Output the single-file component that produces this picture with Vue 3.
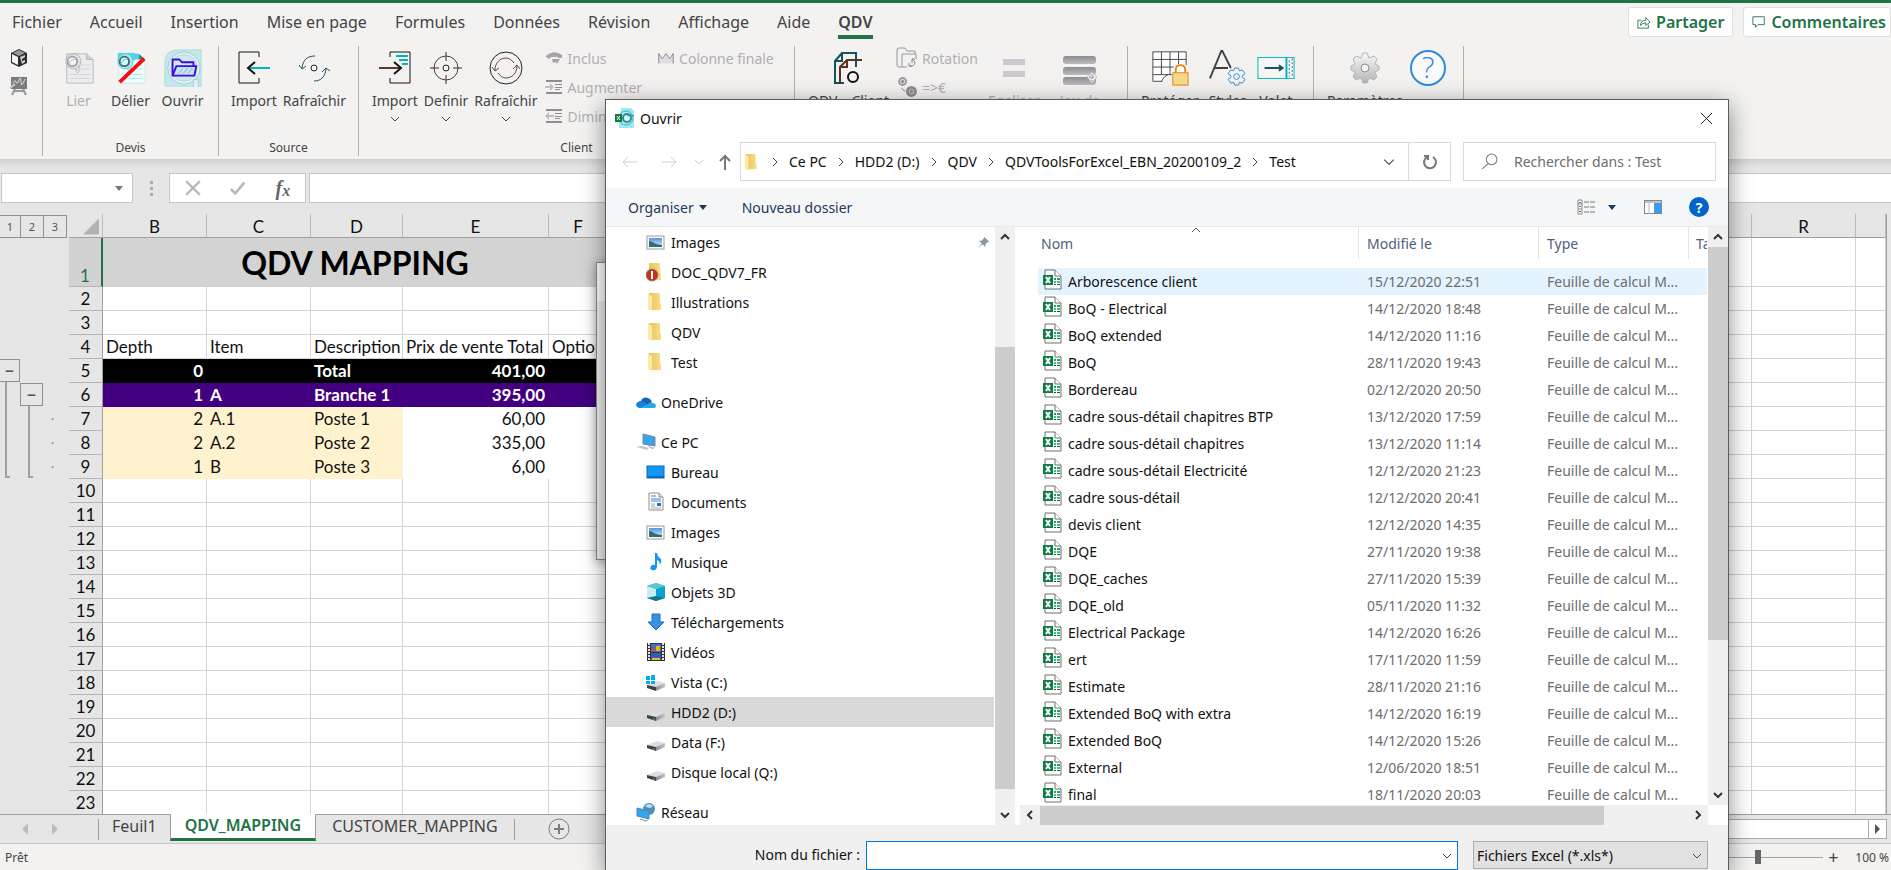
<template>
  <div class="excel">
    <svg class="sprite" aria-hidden="true">
      <defs>
        <linearGradient id="g-gear" x1="0" y1="0" x2="0" y2="1">
          <stop offset="0" stop-color="#f8f8f8" /><stop offset="1" stop-color="#b4b4b4" />
        </linearGradient>
        <linearGradient id="g-bar" x1="0" y1="0" x2="0" y2="1">
          <stop offset="0" stop-color="#8b8b90" /><stop offset="1" stop-color="#bebbc0" />
        </linearGradient>
        <linearGradient id="g-folder" x1="0" y1="0" x2="1" y2="0">
          <stop offset="0" stop-color="#e9c35f" /><stop offset="1" stop-color="#fbdd84" />
        </linearGradient>
        <linearGradient id="g-sky" x1="0" y1="0" x2="0" y2="1">
          <stop offset="0" stop-color="#4f94e0" /><stop offset="1" stop-color="#d9eefb" />
        </linearGradient>
        <linearGradient id="g-drive" x1="0" y1="0" x2="1" y2="0">
          <stop offset="0" stop-color="#8c9094" /><stop offset="1" stop-color="#c4c6c9" />
        </linearGradient>
      </defs>

      <symbol id="cube" viewBox="0 0 18 20">
        <path d="M9 1l8 4v10l-8 4-8-4V5z" fill="#2d2d2d" />
        <path d="M9 2l6 3-6 3-6-3z" fill="#9a9a9a" />
        <path d="M2 6l6 3v8l-6-3z" fill="#f4f4f4" />
        <path d="M10 9l5-2v2l-3 2v2l3-1v2l-3 2z" fill="#d0d0d0" />
      </symbol>
      <symbol id="board" viewBox="0 0 20 20">
        <rect x="2" y="1" width="16" height="12" fill="#7c7c80" />
        <path d="M4 7q2-4 3-1t3-2 2 2 4-3" fill="none" stroke="#ddd" stroke-width="1" />
        <path d="M1 12l5-4" stroke="#c9c9cc" stroke-width="2" />
        <path d="M4 15h12M6 13l-3 6M14 13l3 6" stroke="#9a9a9d" stroke-width="2" fill="none" />
      </symbol>
      <symbol id="link-off" viewBox="0 0 34 36">
        <path d="M4 3h21l7 6v25H4z" fill="#ececef" stroke="#b9b7bd" />
        <path d="M25 3v6h7" fill="#d0d0d5" stroke="#b9b7bd" />
        <path d="M18 15h11M17 19h12M7 25h22M7 29h22" stroke="#d4d2d8" />
        <path d="M14 17v5q2 2 3 0v-6" fill="#ececef" stroke="#b5b3b9" />
        <circle cx="11" cy="11" r="8" fill="#e2e2e6" stroke="#b5b3b9" />
        <circle cx="10" cy="11" r="5" fill="#f5f5f7" stroke="#a3a1a7" stroke-width="2" />
        <path d="M6 14q2-6 8-5" fill="none" stroke="#b9b7bd" />
      </symbol>
      <symbol id="unlink" viewBox="0 0 34 36">
        <path d="M4 3h21l7 6v25H4z" fill="#f0fcfd" stroke="#c9e8ec" />
        <path d="M3 2h18v8H3z" fill="#43dce8" />
        <path d="M25 3l7 6h-7z" fill="#2b7f93" /><path d="M20 3h5v6h-5z" fill="#54cfdb" />
        <path d="M18 15h11M17 19h12M7 25h22M7 29h22" stroke="#9eeaf2" />
        <path d="M14 17v5q2 2 3 0v-6" fill="#c9f6f9" stroke="#7cc6cf" />
        <circle cx="11" cy="11" r="8" fill="#a5edf2" stroke="#72bfca" />
        <circle cx="10" cy="11" r="5" fill="#d8fcff" stroke="#3d6a74" stroke-width="2" />
        <path d="M6 14q2-6 8-5" fill="none" stroke="#4cc2cd" />
        <path d="M5 33L31 8" stroke="#fb0d0d" stroke-width="4" />
      </symbol>
      <symbol id="open-quote" viewBox="0 0 40 40">
        <path d="M1 39V12Q3 1 14 1h25v38z" fill="#c4e9ec" stroke="#a9dbe0" />
        <circle cx="21" cy="20" r="17" fill="#e0f1f3" stroke="#a5ccd3" />
        <circle cx="21" cy="20" r="14" fill="#d2e9ec" stroke="#b5d8dd" />
        <path d="M31 40v-8h5v8" fill="#e6f0f2" stroke="#a5ccd3" />
        <path d="M9 28V11h7l3 3h12v4" fill="#cfe9ed" stroke="#3b0ae6" stroke-width="2" stroke-linejoin="round" />
        <path d="M9 28l4-10h21l-2 10z" fill="#c4e4ea" stroke="#3b0ae6" stroke-width="2" stroke-linejoin="round" />
        <path d="M15 26l5-6M20 26l5-6M25 26l5-6" stroke="#7db5cf" />
      </symbol>
      <symbol id="import-in" viewBox="0 0 34 34">
        <path d="M22 6V1H2v31h20v-5" fill="none" stroke="#151515" stroke-width="1" />
        <path d="M33 17H11" stroke="#00b5b8" stroke-width="2" />
        <path d="M18 11l-7 6 7 6" fill="none" stroke="#151515" stroke-width="2" />
      </symbol>
      <symbol id="refresh-src" viewBox="0 0 34 34">
        <circle cx="17" cy="17" r="3" fill="none" stroke="#222" stroke-width="1" />
        <path d="M18 5C10 5 6 9 5 17M2 14l3 4 4-3" fill="none" stroke="#1c5561" stroke-width="1" />
        <path d="M17 30c7 0 11-4 12-12M25 21l4-4 4 3" fill="none" stroke="#1c5561" stroke-width="1" />
      </symbol>
      <symbol id="import-out" viewBox="0 0 34 34">
        <path d="M12 6V1h20v31H12v-5" fill="none" stroke="#151515" stroke-width="1" />
        <path d="M18 5h12M21 9h9M24 13h6" stroke="#00b5b8" stroke-width="2" />
        <path d="M1 17h22" stroke="#5a3a28" stroke-width="2" />
        <path d="M16 11l7 6-7 6" fill="none" stroke="#151515" stroke-width="2" />
      </symbol>
      <symbol id="target" viewBox="0 0 34 34">
        <circle cx="17" cy="17" r="12" fill="none" stroke="#5c3a2b" stroke-width="1" />
        <circle cx="17" cy="17" r="3" fill="none" stroke="#222" stroke-width="1" />
        <path d="M17 1v9M17 24v9M1 17h9M24 17h9" stroke="#3a2a2a" stroke-width="1" />
      </symbol>
      <symbol id="refresh-client" viewBox="0 0 34 34">
        <circle cx="17" cy="17" r="16" fill="none" stroke="#222" stroke-width="1" />
        <path d="M6 19c0-7 5-12 11-12 3 0 6 2 8 5M28 15c0 7-5 12-11 12-3 0-6-2-8-5" fill="none" stroke="#6b4432" stroke-width="1" />
        <path d="M3 16l3 4 4-3M24 18l4-4 3 4" fill="none" stroke="#6b4432" stroke-width="1" />
      </symbol>
      <symbol id="include" viewBox="0 0 18 16">
        <path d="M1 6q8-7 16-1v3h-4V7H6L4 9 1 7z" fill="#a7a5a8" />
        <path d="M7 9h8l-3 5-1-2-3 1z" fill="#a7a5a8" />
      </symbol>
      <symbol id="indent" viewBox="0 0 18 16">
        <path d="M1 1h16v2H1zM1 13h16v2H1zM10 5h7v1h-7zM10 8h7v1h-7zM10 10h5v1h-5z" fill="#8f8d91" />
        <path d="M0 7h5V4l4 4-4 4V9H0z" fill="#c0bec2" />
      </symbol>
      <symbol id="outdent" viewBox="0 0 18 16">
        <path d="M1 1h16v2H1zM1 13h16v2H1zM10 5h7v1h-7zM10 8h7v1h-7zM10 10h5v1h-5z" fill="#8f8d91" />
        <path d="M9 7H4V4L0 8l4 4V9h5z" fill="#c0bec2" />
      </symbol>
      <symbol id="crown" viewBox="0 0 20 14">
        <path d="M1 2l5 7 4-7 4 7 5-7v11H1z" fill="#e2dde4" />
        <path d="M2 13V2l4 6 4-6 4 6 4-6v11" fill="none" stroke="#857f88" />
      </symbol>
      <symbol id="sheets" viewBox="0 0 34 34">
        <path d="M12 32H3V10l7-8h14v14M3 10h7V2" fill="none" stroke="#14525e" stroke-width="2" />
        <path d="M8 32V16l7-7h15M8 16h7V9" fill="none" stroke="#5a3320" stroke-width="2" />
        <circle cx="21" cy="26" r="5" fill="none" stroke="#111" stroke-width="2" />
      </symbol>
      <symbol id="rotation" viewBox="0 0 22 22">
        <path d="M6 20H3q-2 0-2-2V3q0-2 2-2h6l2 3h8v3" fill="none" stroke="#98969a" />
        <path d="M11 20H6V7h14v5" fill="none" stroke="#98969a" />
        <path d="M13 19q6 1 6-4l-3-3M19 12h-3v4M13 16v3h3" fill="none" stroke="#8a888c" />
      </symbol>
      <symbol id="coins" viewBox="0 0 20 20">
        <circle cx="6" cy="5" r="4" fill="#99979b" /><circle cx="6" cy="5" r="2" fill="none" stroke="#d8d6da" />
        <circle cx="14" cy="14" r="5" fill="#8d8b8f" /><circle cx="14" cy="14" r="2" fill="none" stroke="#bab8bc" />
        <path d="M5 11l3 3" stroke="#99979b" />
      </symbol>
      <symbol id="equalize" viewBox="0 0 34 34">
        <path d="M6 8h22v6H6zM6 20h22v6H6z" fill="#cdc8cf" />
      </symbol>
      <symbol id="rowset" viewBox="0 0 34 34">
        <rect x="0" y="5" width="33" height="8" rx="3" fill="url(#g-bar)" />
        <rect x="0" y="16" width="33" height="8" rx="3" fill="url(#g-bar)" />
        <rect x="0" y="26" width="33" height="8" rx="3" fill="url(#g-bar)" />
        <path d="M29 21l5 5-5 6-5-6z" fill="#eceaee" stroke="#c0bec2" />
        <path d="M29 23v7M26 26h6" stroke="#8a888c" stroke-dasharray="2 1" />
      </symbol>
      <symbol id="protect" viewBox="0 0 40 40">
        <path d="M2 3h35v24H20l-3 4-5 3H2z" fill="#fff" />
        <path d="M37 17V3H2v31h10M2 11h35M2 19h22M2 27h20M11 3v24M20 3v24M29 3v13" fill="none" stroke="#444" stroke-width="1" />
        <path d="M11 34q3-6 7-7" fill="none" stroke="#444" stroke-width="1" />
        <path d="M26 25v-3q0-5 5-5t5 5v3" fill="none" stroke="#e8820e" stroke-width="2" />
        <rect x="23" y="25" width="16" height="13" fill="#f8da8e" stroke="#e8820e" stroke-width="1" />
      </symbol>
      <symbol id="styles" viewBox="0 0 40 40">
        <path d="M1 31L13 2h1l9 18M6 20h14" fill="none" stroke="#404040" stroke-width="2" />
        <path d="M27 20h4l1 3 3-1 3 4-3 2v2l3 2-3 4-3-1-1 3h-4l-1-3-3 1-3-4 3-2v-2l-3-2 3-4 3 1z" fill="#f3f2f1" stroke="#2e8bd8" stroke-width="1" stroke-linejoin="round" />
        <circle cx="29" cy="29" r="3" fill="none" stroke="#2e8bd8" stroke-width="1" />
      </symbol>
      <symbol id="pane" viewBox="0 0 40 40">
        <rect x="1" y="9" width="38" height="22" fill="#f6f6f6" stroke="#00b5b8" stroke-width="1" />
        <path d="M31 9v22" stroke="#00b5b8" stroke-width="2" />
        <path d="M34 12v17M37 10v20" stroke="#276a75" stroke-dasharray="2 2" />
        <path d="M8 20h18M23 17l4 3-4 3" fill="none" stroke="#1c5561" stroke-width="2" />
      </symbol>
      <symbol id="gear" viewBox="0 0 32 34">
        <path d="M14 2h4l2 5 5-2 3 3-2 5 4 2v4l-4 2 2 5-3 3-5-2-2 5h-4l-2-5-5 2-3-3 2-5-4-2v-4l4-2-2-5 3-3 5 2z" fill="url(#g-gear)" stroke="#b5b5b5" stroke-linejoin="round" />
        <circle cx="16" cy="17" r="4" fill="#f3f2f1" stroke="#8e8e8e" stroke-width="1" />
      </symbol>
      <symbol id="share" viewBox="0 0 16 16">
        <path d="M5 6H1v9h12v-4" fill="none" stroke="#217346" />
        <path d="M4 12q0-6 6-6V3l5 5-5 4V9q-4 0-6 3z" fill="none" stroke="#217346" stroke-linejoin="round" />
      </symbol>
      <symbol id="comment" viewBox="0 0 16 16">
        <path d="M1 2h13v9H7l-3 3v-3H1z" fill="none" stroke="#217346" />
      </symbol>
      <symbol id="qdv-excel" viewBox="0 0 20 20">
        <path d="M6 0h10l3 3v17H4z" fill="#9fe8f0" />
        <circle cx="11" cy="10" r="7" fill="#a8edf3" stroke="#35b4c4" />
        <circle cx="12" cy="10" r="4" fill="#d9fafd" stroke="#2a8c9c" stroke-width="2" />
        <path d="M12 8q4-2 7 0" fill="none" stroke="#2a8c9c" />
        <path d="M0 6h7v8H0z" fill="#107c41" />
        <path d="M2 8l3 4M5 8l-3 4" stroke="#fff" />
      </symbol>
      <symbol id="folder" viewBox="0 0 20 20">
        <path d="M3 1h10q1 0 1 2v8l1 1v6H3z" fill="url(#g-folder)" />
        <path d="M2 2l4 2v15l-4-2z" fill="#fdeaa9" />
      </symbol>
      <symbol id="folder-alert" viewBox="0 0 20 20">
        <path d="M3 1h10q1 0 1 2v8l1 1v6H3z" fill="url(#g-folder)" />
        <circle cx="6" cy="13" r="6" fill="#c9301c" stroke="#8d8076" />
        <path d="M6 9v8" stroke="#fff" stroke-width="2" />
      </symbol>
      <symbol id="picture" viewBox="0 0 20 20">
        <rect x="1" y="4" width="17" height="13" fill="#fff" stroke="#9a9a9a" />
        <rect x="3" y="6" width="13" height="9" fill="url(#g-sky)" />
        <path d="M3 9q3 0 5 2 4 2 8 2v2H3z" fill="#2f6f73" />
      </symbol>
      <symbol id="cloud" viewBox="0 0 20 20">
        <path d="M5 9q2-5 7-3 3 1 4 4l-6 4-9 1q-2-5 4-6z" fill="#0f64b8" />
        <path d="M1 11q3-3 7-1l8 6H3q-4-2-2-5z" fill="#1583d8" />
        <path d="M4 16l10-5q5-1 6 3 0 2-3 2z" fill="#29a6ec" />
      </symbol>
      <symbol id="pc" viewBox="0 0 20 20">
        <path d="M7 2l12 3v9L7 12z" fill="#37a5ee" stroke="#7b8794" />
        <path d="M12 13l3 3h3" stroke="#8b949e" fill="none" />
        <path d="M0 15l6-1 7 2-2 2z" fill="#c3c9cf" />
      </symbol>
      <symbol id="desktop" viewBox="0 0 20 20">
        <rect x="1" y="4" width="17" height="12" fill="#1397f7" stroke="#0b69b5" />
        <path d="M2 15h16" stroke="#084a86" />
      </symbol>
      <symbol id="document" viewBox="0 0 20 20">
        <path d="M3 1h10l4 4v13H3z" fill="#fff" stroke="#8f8f8f" />
        <path d="M13 1v4h4" fill="#ddd" stroke="#8f8f8f" />
        <path d="M5 4h5M5 7h10M5 9h10" stroke="#2c86cf" />
        <path d="M5 12h4M5 14h4M5 16h10" stroke="#a4a4a4" />
        <rect x="11" y="11" width="4" height="3" fill="#2b6ea5" />
      </symbol>
      <symbol id="music" viewBox="0 0 20 20">
        <path d="M9 1h2q0 3 4 6 1 3-1 6 0-4-3-5v7q-1 4-5 3-3-1-1-4 2-2 4-1z" fill="#1397f7" />
      </symbol>
      <symbol id="cube3d" viewBox="0 0 20 20">
        <path d="M1 4l9-3 9 3v12l-9 3-9-3z" fill="#3cb4d2" />
        <path d="M1 4l9 3v8l-9 1z" fill="#c4eef2" /><path d="M10 7l9-3v12l-9-2z" fill="#0aa2d3" />
        <path d="M1 16l9-2 9 2-9 3z" fill="#10758e" /><path d="M1 4l9-3 9 3-9 3z" fill="#5cc3d0" />
      </symbol>
      <symbol id="download" viewBox="0 0 20 20">
        <path d="M6 2h8v8h4l-8 8-8-8h4z" fill="#3592e4" stroke="#1e6fbd" />
      </symbol>
      <symbol id="video" viewBox="0 0 20 20">
        <rect x="1" y="1" width="18" height="18" fill="#333" />
        <path d="M3 1v18M17 1v18" stroke="#e6e6e6" stroke-width="2" stroke-dasharray="2 1" />
        <rect x="5" y="2" width="10" height="8" fill="#3d6fd1" /><rect x="5" y="11" width="10" height="7" fill="#2c5ebc" />
        <path d="M10 4h4v5h-4z" fill="#e7b416" /><path d="M5 6h4v3H5z" fill="#d0492b" /><path d="M6 16h8v2H6z" fill="#eebd1f" />
      </symbol>
      <symbol id="drive" viewBox="0 0 20 20">
        <path d="M1 13l10-4 8 2-8 4z" fill="#dcdee1" />
        <path d="M1 13l9 2v4l-9-3z" fill="#3e4245" /><path d="M10 15l9-4v4l-9 4z" fill="url(#g-drive)" />
        <path d="M7 17h2" stroke="#3bd13b" />
      </symbol>
      <symbol id="drive-win" viewBox="0 0 20 20">
        <path d="M1 13l10-4 8 2-8 4z" fill="#dcdee1" />
        <path d="M1 13l9 2v4l-9-3z" fill="#3e4245" /><path d="M10 15l9-4v4l-9 4z" fill="url(#g-drive)" />
        <path d="M0 4h4v4H0zM5 3h4v5H5zM0 9h4v3H0zM5 9h4v3H5z" fill="#00adef" />
      </symbol>
      <symbol id="network" viewBox="0 0 20 20">
        <circle cx="13" cy="7" r="6" fill="#4f8fb5" /><path d="M9 4q4-4 8 0-3 4-8 0z" fill="#b8dbea" />
        <path d="M1 6l12 3v8L1 14z" fill="#37a5ee" stroke="#4887b4" />
        <path d="M4 17l6 2 2-1" stroke="#8b949e" fill="none" />
      </symbol>
      <symbol id="xls" viewBox="0 0 20 22">
        <path d="M3 1h10l6 6v13H3z" fill="#fff" stroke="#6f6f6f" />
        <path d="M13 1v6h6" fill="#fff" stroke="#6f6f6f" />
        <path d="M12 9h2v2h-2zM15 9h3v2h-3z" fill="#21a366" /><path d="M12 12h2v2h-2zM15 12h3v2h-3z" fill="#33c481" />
        <path d="M12 15h2v1h-2zM15 15h3v1h-3z" fill="#185c37" />
        <rect x="1" y="6" width="10" height="10" fill="#107c41" />
        <path d="M4 8l4 6M8 8l-4 6" stroke="#fff" stroke-width="2" />
      </symbol>
      <symbol id="pin" viewBox="0 0 14 14">
        <path d="M8 1l5 5-2 1-2 2v3L6 9l-5 4 4-5-3-3h3l2-2z" fill="#8b98a4" />
      </symbol>
      <symbol id="views" viewBox="0 0 18 16">
        <path d="M1 1h4v14H1zM1 5h4M1 10h4" fill="#fff" stroke="#8a8a8a" />
        <path d="M3 3v1M3 7v1" stroke="#3a7f9a" stroke-width="2" /><path d="M3 12v1" stroke="#c0392b" stroke-width="2" />
        <path d="M7 3h5M13 3h5M7 8h5M13 8h5M7 13h5M13 13h5" stroke="#777" />
      </symbol>
      <symbol id="preview" viewBox="0 0 18 14">
        <rect x="0" y="0" width="18" height="14" fill="#fff" stroke="#7d8794" stroke-width="2" />
        <path d="M0 2h18" stroke="#7d8794" /><path d="M5 2v12" stroke="#bbb" />
        <rect x="10" y="3" width="7" height="10" fill="#3f9ae8" />
      </symbol>
      <symbol id="chev-down" viewBox="0 0 10 10"><path d="M1 3l4 4 4-4" fill="none" stroke="currentColor" /></symbol>
      <symbol id="chev-up" viewBox="0 0 10 10"><path d="M1 7l4-4 4 4" fill="none" stroke="currentColor" /></symbol>
      <symbol id="chev-left" viewBox="0 0 10 10"><path d="M7 1L3 5l4 4" fill="none" stroke="currentColor" /></symbol>
      <symbol id="chev-right" viewBox="0 0 10 10"><path d="M3 1l4 4-4 4" fill="none" stroke="currentColor" /></symbol>
      <symbol id="tri-down" viewBox="0 0 10 10"><path d="M1 3h8L5 8z" fill="currentColor" /></symbol>
      <symbol id="arrow-left" viewBox="0 0 16 16"><path d="M15 8H1M6 3L1 8l5 5" fill="none" stroke="currentColor" /></symbol>
      <symbol id="arrow-right" viewBox="0 0 16 16"><path d="M1 8h14M10 3l5 5-5 5" fill="none" stroke="currentColor" /></symbol>
      <symbol id="arrow-up" viewBox="0 0 16 16"><path d="M8 16V1M3 7l5-5 5 5" fill="none" stroke="currentColor" stroke-width="2" /></symbol>
      <symbol id="reload" viewBox="0 0 16 16"><path d="M5 3a6 6 0 1 0 6 0M2 2h4v4" fill="none" stroke="currentColor" stroke-width="2" /></symbol>
      <symbol id="search" viewBox="0 0 16 16"><circle cx="10" cy="6" r="5" fill="none" stroke="currentColor" /><path d="M7 10l-6 5" stroke="currentColor" /></symbol>
      <symbol id="cross" viewBox="0 0 14 14"><path d="M1 1l12 12M13 1L1 13" stroke="currentColor" /></symbol>
      <symbol id="cancel" viewBox="0 0 14 14"><path d="M1 1l12 12M13 1L1 13" stroke="currentColor" stroke-width="2" /></symbol>
      <symbol id="check" viewBox="0 0 18 16"><path d="M1 9l5 5L16 2" fill="none" stroke="currentColor" stroke-width="3" /></symbol>
    </svg>

    <nav class="menu">
      <a v-for="m in menus" :key="m" href="#" class="menu-item" :class="{ active: m === 'QDV' }">{{ m }}</a>
      <div class="menu-right">
        <button class="pill"><svg><use href="#share" /></svg>Partager</button>
        <button class="pill"><svg><use href="#comment" /></svg>Commentaires</button>
      </div>
    </nav>

    <div class="ribbon">
      <section class="group quick">
        <button aria-label="Cube"><svg><use href="#cube" /></svg></button>
        <button aria-label="Tableau"><svg><use href="#board" /></svg></button>
      </section>
      <section v-for="g in groups" :key="g.id" class="group" :class="g.id">
        <div class="tools">
          <button v-for="t in g.tools" :key="t.label" class="tool" :class="{ off: t.off }" :disabled="t.off">
            <svg class="tool-icon"><use :href="'#' + t.icon" /></svg>
            <span>{{ t.label }}</span>
            <svg v-if="t.menu" class="caret"><use href="#chev-down" /></svg>
          </button>
          <div v-for="(col, i) in g.stacks" :key="i" class="stack">
            <button v-for="s in col" :key="s.label" class="small" disabled>
              <svg><use :href="'#' + s.icon" /></svg>{{ s.label }}
            </button>
          </div>
          <button v-for="t in g.after" :key="t.label" class="tool off" disabled>
            <svg class="tool-icon"><use :href="'#' + t.icon" /></svg>
            <span>{{ t.label }}</span>
          </button>
          <button v-if="g.id === 'setup'" class="tool" aria-label="Aide">
            <svg class="tool-icon" viewBox="0 0 38 38">
              <circle cx="19" cy="19" r="17" fill="#fafafa" stroke="#2e8bd8" stroke-width="2" />
              <text x="19" y="29" text-anchor="middle" class="big-q">?</text>
            </svg>
          </button>
        </div>
        <div class="group-name">{{ g.name }}</div>
      </section>
    </div>

    <div class="formula">
      <div class="namebox">
        <input type="text" aria-label="Zone Nom">
        <svg><use href="#tri-down" /></svg>
      </div>
      <div class="grip"><i></i><i></i><i></i></div>
      <div class="fx">
        <button aria-label="Annuler"><svg><use href="#cancel" /></svg></button>
        <button aria-label="Entrer"><svg><use href="#check" /></svg></button>
        <button class="fx-label">f<sub>x</sub></button>
      </div>
      <input class="formula-input" type="text" aria-label="Barre de formule">
    </div>

    <main class="sheet">
      <aside class="outline">
        <div class="levels">
          <button v-for="n in 3" :key="n">{{ n }}</button>
        </div>
        <div class="brackets">
          <div class="bracket first"><button>−</button><span class="bracket-line"></span></div>
          <div class="bracket second"><button>−</button><span class="bracket-line"></span></div>
          <div class="bracket third"><i v-for="n in 3" :key="n">.</i></div>
        </div>
      </aside>
      <div class="grid-wrap">
        <table class="grid">
          <colgroup>
            <col class="w-head"><col class="w-b"><col class="w-b"><col class="w-d"><col class="w-e"><col class="w-f">
            <col v-for="c in 12" :key="c" class="w-b"><col>
          </colgroup>
          <thead>
            <tr>
              <th class="corner"><i></i></th>
              <th v-for="c in columns" :key="c">{{ c }}</th>
              <th></th>
            </tr>
          </thead>
          <tbody>
            <tr class="title-row">
              <th>1</th>
              <td colspan="5" class="title">QDV MAPPING</td>
              <td v-for="c in 13" :key="c"></td>
            </tr>
            <tr v-for="r in rows" :key="r.n" :class="r.kind">
              <th>{{ r.n }}</th>
              <td v-for="(v, i) in r.cells" :key="i" :class="{ num: i === 0 && r.kind || i === 3 && r.kind }">{{ v }}</td>
              <td v-for="c in 13" :key="'e' + c" class="empty"></td>
            </tr>
          </tbody>
        </table>
      </div>
    </main>

    <div class="tabs">
      <button class="tri left" aria-label="Feuille précédente"></button>
      <button class="tri right" aria-label="Feuille suivante"></button>
      <div class="tab first-tab"><a href="#">Feuil1</a></div>
      <div class="tab current"><a href="#">QDV_MAPPING</a></div>
      <div class="tab last-tab"><a href="#">CUSTOMER_MAPPING</a></div>
      <button class="add" aria-label="Nouvelle feuille"><svg viewBox="0 0 22 22">
        <circle cx="11" cy="11" r="10" fill="none" stroke="#7d7d7d" /><path d="M11 6v10M6 11h10" stroke="#7d7d7d" stroke-width="2" />
      </svg></button>
      <div class="hscroll"><button aria-label="Défiler à droite"></button></div>
    </div>
    <footer class="status">
      <span>Prêt</span>
      <div class="zoom">
        <input type="range" min="10" max="190" value="100" aria-label="Zoom">
        <button aria-label="Zoom avant">+</button>
        <span>100 %</span>
      </div>
    </footer>

    <div class="back-window"><div></div></div>

    <div class="dialog" role="dialog" aria-label="Ouvrir">
      <header class="caption">
        <svg><use href="#qdv-excel" /></svg>
        <span>Ouvrir</span>
        <button aria-label="Fermer"><svg><use href="#cross" /></svg></button>
      </header>

      <div class="address-row">
        <button class="nav-btn dim" aria-label="Précédent"><svg><use href="#arrow-left" /></svg></button>
        <button class="nav-btn dim" aria-label="Suivant"><svg><use href="#arrow-right" /></svg></button>
        <button class="nav-btn dim recent" aria-label="Emplacements récents"><svg><use href="#chev-down" /></svg></button>
        <button class="nav-btn up" aria-label="Dossier parent"><svg><use href="#arrow-up" /></svg></button>
        <div class="address">
          <svg class="crumb-folder"><use href="#folder" /></svg>
          <template v-for="p in path" :key="p">
            <svg class="crumb-sep"><use href="#chev-right" /></svg>
            <a href="#">{{ p }}</a>
          </template>
          <button class="address-menu" aria-label="Historique"><svg><use href="#chev-down" /></svg></button>
          <button class="address-reload" aria-label="Actualiser"><svg><use href="#reload" /></svg></button>
        </div>
        <label class="search">
          <svg><use href="#search" /></svg>
          <input type="text" placeholder="Rechercher dans : Test" aria-label="Rechercher">
        </label>
      </div>

      <div class="commands">
        <button>Organiser<svg><use href="#tri-down" /></svg></button>
        <button>Nouveau dossier</button>
        <div class="commands-right">
          <button aria-label="Affichage"><svg class="views"><use href="#views" /></svg><svg class="tri-ico"><use href="#tri-down" /></svg></button>
          <button aria-label="Volet de visualisation"><svg class="preview"><use href="#preview" /></svg></button>
          <button class="help" aria-label="Obtenir de l'aide">?</button>
        </div>
      </div>

      <div class="panes">
        <nav class="tree">
          <a
            v-for="(t, i) in tree"
            :key="i"
            href="#"
            class="node"
            :class="{ root: t.root, selected: t.label === 'HDD2 (D:)' }"
          >
            <svg><use :href="'#' + t.icon" /></svg>
            <span>{{ t.label }}</span>
            <svg v-if="t.pinned" class="pin"><use href="#pin" /></svg>
          </a>
        </nav>
        <div class="vbar tree-bar">
          <svg><use href="#chev-up" /></svg>
          <div class="track"><div class="thumb"></div></div>
          <svg><use href="#chev-down" /></svg>
        </div>
        <div class="files">
          <div class="list-row">
            <div class="list">
              <table>
                <colgroup><col><col class="w-date"><col class="w-type"><col class="w-size"></colgroup>
                <thead>
                  <tr>
                    <th><div>Nom<svg class="sort"><use href="#chev-up" /></svg></div></th>
                    <th><div>Modifié le</div></th>
                    <th><div>Type</div></th>
                    <th><div class="cut">Taille</div></th>
                  </tr>
                </thead>
                <tbody>
                  <tr v-for="(f, i) in files" :key="f[0]" :class="{ hover: i === 0 }">
                    <td class="file-name"><svg><use href="#xls" /></svg>{{ f[0] }}</td>
                    <td>{{ f[1] }}</td>
                    <td>Feuille de calcul M...</td>
                    <td></td>
                  </tr>
                </tbody>
              </table>
            </div>
            <div class="vbar list-bar">
              <svg><use href="#chev-up" /></svg>
              <div class="track"><div class="thumb"></div></div>
              <svg><use href="#chev-down" /></svg>
            </div>
          </div>
          <div class="hbar">
            <svg><use href="#chev-left" /></svg>
            <div class="track"><div class="thumb"></div></div>
            <svg><use href="#chev-right" /></svg>
          </div>
        </div>
      </div>

      <div class="dialog-foot">
        <label for="filename">Nom du fichier :</label>
        <div class="combo">
          <input id="filename" v-model="fileName" type="text">
          <svg><use href="#chev-down" /></svg>
        </div>
        <div class="filter">
          <select aria-label="Type de fichier"><option>Fichiers Excel (*.xls*)</option></select>
          <svg><use href="#chev-down" /></svg>
        </div>
      </div>
    </div>
  </div>
</template>

<script setup>
import { ref } from 'vue'

const fileName = ref('')

const menus = ['Fichier', 'Accueil', 'Insertion', 'Mise en page', 'Formules', 'Données', 'Révision', 'Affichage', 'Aide', 'QDV']

const groups = [
  {
    id: 'devis', name: 'Devis',
    tools: [
      { label: 'Lier', icon: 'link-off', off: true },
      { label: 'Délier', icon: 'unlink' },
      { label: 'Ouvrir', icon: 'open-quote' },
    ],
  },
  {
    id: 'source', name: 'Source',
    tools: [
      { label: 'Import', icon: 'import-in' },
      { label: 'Rafraîchir', icon: 'refresh-src' },
    ],
  },
  {
    id: 'client', name: 'Client',
    tools: [
      { label: 'Import', icon: 'import-out', menu: true },
      { label: 'Definir', icon: 'target', menu: true },
      { label: 'Rafraîchir', icon: 'refresh-client', menu: true },
    ],
    stacks: [
      [
        { label: 'Inclus', icon: 'include' },
        { label: 'Augmenter', icon: 'indent' },
        { label: 'Diminuer', icon: 'outdent' },
      ],
      [{ label: 'Colonne finale', icon: 'crown' }],
    ],
  },
  {
    id: 'transfer', name: '',
    tools: [{ label: 'QDV→Client', icon: 'sheets' }],
    stacks: [
      [
        { label: 'Rotation', icon: 'rotation' },
        { label: '=>€', icon: 'coins' },
      ],
    ],
    after: [
      { label: 'Egaliser', icon: 'equalize' },
      { label: 'Jeu de', icon: 'rowset' },
    ],
  },
  {
    id: 'display', name: '',
    tools: [
      { label: 'Protéger', icon: 'protect' },
      { label: 'Styles', icon: 'styles' },
      { label: 'Volet', icon: 'pane' },
    ],
  },
  { id: 'setup', name: '', tools: [{ label: 'Paramètres', icon: 'gear' }] },
]

const columns = 'BCDEFGHIJKLMNOPQR'.split('')

const blank = ['', '', '', '', '']
const data = {
  4: { cells: ['Depth', 'Item', 'Description', 'Prix de vente Total', 'Option'] },
  5: { kind: 'total', cells: ['0', '', 'Total', '401,00', ''] },
  6: { kind: 'branch', cells: ['1', 'A', 'Branche 1', '395,00', ''] },
  7: { kind: 'item', cells: ['2', 'A.1', 'Poste 1', '60,00', ''] },
  8: { kind: 'item', cells: ['2', 'A.2', 'Poste 2', '335,00', ''] },
  9: { kind: 'item', cells: ['1', 'B', 'Poste 3', '6,00', ''] },
}
const rows = Array.from({ length: 22 }, (_, i) => ({ n: i + 2, cells: blank, ...data[i + 2] }))

const path = ['Ce PC', 'HDD2 (D:)', 'QDV', 'QDVToolsForExcel_EBN_20200109_2', 'Test']

const tree = [
  { label: 'Images', icon: 'picture', pinned: true },
  { label: 'DOC_QDV7_FR', icon: 'folder-alert' },
  { label: 'Illustrations', icon: 'folder' },
  { label: 'QDV', icon: 'folder' },
  { label: 'Test', icon: 'folder' },
  { label: 'OneDrive', icon: 'cloud', root: true },
  { label: 'Ce PC', icon: 'pc', root: true },
  { label: 'Bureau', icon: 'desktop' },
  { label: 'Documents', icon: 'document' },
  { label: 'Images', icon: 'picture' },
  { label: 'Musique', icon: 'music' },
  { label: 'Objets 3D', icon: 'cube3d' },
  { label: 'Téléchargements', icon: 'download' },
  { label: 'Vidéos', icon: 'video' },
  { label: 'Vista (C:)', icon: 'drive-win' },
  { label: 'HDD2 (D:)', icon: 'drive' },
  { label: 'Data (F:)', icon: 'drive' },
  { label: 'Disque local (Q:)', icon: 'drive' },
  { label: 'Réseau', icon: 'network', root: true },
]

const files = [
  ['Arborescence client', '15/12/2020 22:51'],
  ['BoQ - Electrical', '14/12/2020 18:48'],
  ['BoQ extended', '14/12/2020 11:16'],
  ['BoQ', '28/11/2020 19:43'],
  ['Bordereau', '02/12/2020 20:50'],
  ['cadre sous-détail chapitres BTP', '13/12/2020 17:59'],
  ['cadre sous-détail chapitres', '13/12/2020 11:14'],
  ['cadre sous-détail Electricité', '12/12/2020 21:23'],
  ['cadre sous-détail', '12/12/2020 20:41'],
  ['devis client', '12/12/2020 14:35'],
  ['DQE', '27/11/2020 19:38'],
  ['DQE_caches', '27/11/2020 15:39'],
  ['DQE_old', '05/11/2020 11:32'],
  ['Electrical Package', '14/12/2020 16:26'],
  ['ert', '17/11/2020 11:59'],
  ['Estimate', '28/11/2020 21:16'],
  ['Extended BoQ with extra', '14/12/2020 16:19'],
  ['Extended BoQ', '14/12/2020 15:26'],
  ['External', '12/06/2020 18:51'],
  ['final', '18/11/2020 20:03'],
]
</script>

<style>
body { margin: 0; overflow: hidden; }
</style>

<style scoped>
.excel {
  position: relative; height: 100vh; overflow: hidden; display: flex; flex-direction: column;
  background: #e6e6e6; color: #444; font-family: "Noto Sans", "Open Sans", sans-serif; font-size: 14px;
}
.excel * { box-sizing: border-box; }
.sprite { position: absolute; width: 0; height: 0; }
button, input, select { font: inherit; color: inherit; background: none; border: 0; padding: 0; margin: 0; outline: none; border-radius: 0; }
a { color: inherit; text-decoration: none; }
svg { display: block; flex-shrink: 0; }

/* menu */
.menu {
  height: 39px; flex-shrink: 0; border-top: 3px solid #217346; background: #f3f2f1; padding-left: 12px;
  display: flex; gap: 28px; font-size: 16px; white-space: nowrap;
}
.menu-item { line-height: 38px; height: 36px; }
.menu-item.active { font-weight: 600; border-bottom: 4px solid #217346; }
.menu-right { margin-left: auto; display: flex; gap: 10px; padding-top: 4px; }
.pill {
  height: 30px; background: #fff; border: 1px solid #e1dfdd; border-radius: 3px; padding: 0 8px;
  display: flex; align-items: center; gap: 5px; color: #217346; font-size: 16px; font-weight: 600;
}
.pill:last-child { padding-right: 4px; }
.pill svg { width: 14px; height: 16px; }

/* ribbon */
.ribbon { height: 121px; flex-shrink: 0; background: #f3f2f1; padding-top: 7px; display: flex; border-bottom: 1px solid #d2d0ce; }
.group { height: 110px; border-right: 1px solid #b3b0ad; display: flex; flex-direction: column; flex-shrink: 0; }
.quick { width: 43px; align-items: center; padding: 2px 5px 0 0; gap: 8px; }
.quick svg { width: 20px; height: 20px; }
.devis { width: 176px; }
.source { width: 140px; }
.client { width: 436px; }
.transfer { width: 333px; }
.display { width: 186px; }
.setup { width: 150px; }
.tools { flex: 1; display: flex; justify-content: center; padding-top: 3px; }
.client .tools, .transfer .tools, .display .tools, .setup .tools { justify-content: flex-start; padding-left: 10px; }
.tool { display: flex; flex-direction: column; align-items: center; padding: 0 3px; height: 85px; white-space: nowrap; }
.devis .tool { width: 52px; }
.tool-icon { width: 38px; height: 38px; padding: 2px; }
.devis .tool:last-child .tool-icon, .display .tool-icon, .setup .tool:last-child .tool-icon { padding: 0; }
.tool span { line-height: 20px; margin-top: 4px; }
.off, .small { color: #b1aeb0; }
.caret { width: 10px; height: 10px; margin-top: 3px; }
.group-name { text-align: center; font-size: 12px; line-height: 16px; height: 16px; }
.stack { margin-left: 5px; padding-right: 10px; }
.small { height: 29px; display: flex; align-items: center; gap: 4px; white-space: nowrap; padding-bottom: 11px; }
.small svg { width: 18px; height: 16px; }
.transfer .small svg { width: 22px; height: 22px; }
.transfer .stack { margin-left: 4px; padding-right: 3px; }
.transfer .off { width: 66px; }
.display .tools { padding-left: 8px; }
.display .tool { padding: 0 5px; }
.big-q { font-size: 30px; fill: #2e8bd8; font-family: "Open Sans", sans-serif; font-weight: 300; }

/* formula bar */
.formula {
  height: 54px; flex-shrink: 0; padding: 13px 0 0 1px; display: flex;
  background: linear-gradient(#d4d4d4, #e6e6e6 8px);
}
.namebox, .fx, .formula-input { height: 30px; background: #fff; border: 1px solid #c6c6c6; }
.namebox { width: 132px; display: flex; align-items: center; padding-right: 8px; }
.namebox input { flex: 1; min-width: 0; height: 100%; }
.namebox svg { width: 10px; height: 10px; color: #777; }
.grip { width: 36px; display: flex; flex-direction: column; align-items: center; justify-content: center; gap: 3px; height: 30px; }
.grip i { width: 3px; height: 3px; background: #ababab; }
.fx { width: 137px; display: flex; align-items: center; justify-content: space-around; color: #b9b9b9; }
.fx svg { width: 16px; height: 16px; }
.fx-label { font-family: "Liberation Serif", serif; font-style: italic; font-weight: bold; font-size: 20px; color: #666; line-height: 20px; }
.fx-label sub { font-size: 16px; vertical-align: -1px; line-height: 0; }
.formula-input { flex: 1; margin-left: 3px; border-right: 0; padding: 0 8px; }

/* sheet */
.sheet { flex: 1; min-height: 0; display: flex; overflow: hidden; padding-right: 4px; font-family: Lato, "Noto Sans", sans-serif; font-size: 17px; color: #111; }
.outline { width: 69px; flex-shrink: 0; }
.levels { display: flex; height: 24px; padding-top: 1px; }
.levels button { width: 24px; margin-left: -1px; border: 1px solid #8c9097; font-family: "Noto Sans", sans-serif; font-size: 11px; color: #555; }
.levels button:first-child { width: 22px; }
.brackets { display: flex; height: 240px; }
.bracket { display: flex; flex-direction: column; width: 23px; }
.bracket.first { width: 20px; padding-top: 121px; }
.bracket.second { padding-top: 145px; }
.bracket.third { padding-top: 168px; padding-left: 8px; }
.bracket.third i { height: 24px; font-style: normal; font-size: 14px; color: #888; }
.bracket button { height: 23px; border: 1px solid #8c9097; line-height: 20px; font-weight: bold; color: #555; }
.bracket.first button { border-left: 0; }
.bracket-line { flex: 1; width: 5px; margin-left: 5px; border-left: 2px solid #a0a0a0; border-bottom: 2px solid #a0a0a0; }
.bracket.second .bracket-line { margin-left: 8px; }
.grid-wrap { flex: 1; min-width: 0; overflow: hidden; border-right: 1px solid #9f9f9f; }
.grid { table-layout: fixed; width: 100%; border-collapse: separate; border-spacing: 0; }
.w-head { width: 34px; }
.w-b { width: 104px; }
.w-d { width: 92px; }
.w-e { width: 146px; }
.w-f { width: 59px; }
.grid th, .grid td { height: 24px; padding: 1px 0 0; line-height: 20px; white-space: nowrap; overflow: hidden; font-weight: normal; border: 0 solid #d4d4d4; border-width: 0 1px 1px 0; }
.grid td { background: #fff; padding: 1px 3px 0; }
.grid thead th { background: #e6e6e6; border-color: #9f9f9f; border-right-color: #bbb; text-align: center; padding-top: 2px; }
.corner i { display: block; margin-left: 14px; width: 16px; height: 16px; background: #b2b2b2; clip-path: polygon(100% 0, 100% 100%, 0 100%); }
.grid tbody th { background: #e6e6e6; border-right-color: #9f9f9f; border-bottom-color: #b5b5b5; text-align: center; }
.grid .title-row th { height: 49px; background: #d2d2d2; color: #217346; vertical-align: bottom; border-right: 2px solid #217346; }
.grid .title { background: #d3d3d3; text-align: center; font-size: 32px; font-weight: bold; line-height: 40px; border-color: #d3d3d3; color: #000; }
.grid td.num { text-align: right; }
.total td:not(.empty), .branch td:not(.empty) { background: #000; border-color: #000; color: #fff; font-weight: bold; }
.branch td:not(.empty) { background: #420080; border-color: #420080; }
.item td:not(.empty) { border-color: #fff; }
.item td:nth-child(-n+4) { background: #fff2cf; border-color: #fff2cf; }

/* sheet tabs */
.tabs { height: 30px; flex-shrink: 0; display: flex; border-top: 1px solid #9f9f9f; border-bottom: 1px solid #c6c6c6; font-size: 16px; position: relative; white-space: nowrap; }
.tri { width: 0; height: 0; border: 6px solid transparent; margin-top: 8px; }
.tri.left { border-right-color: #bdbdbd; border-left: 0; margin-left: 22px; }
.tri.right { border-left-color: #bdbdbd; border-right: 0; margin-left: 24px; margin-right: 40px; }
.tab { height: 21px; line-height: 20px; margin-top: 4px; padding: 0 13px; border-left: 1px solid #9f9f9f; }
.tab a { display: block; line-height: 14px; }
.tab.current { margin-top: -1px; height: 27px; background: #fff; border-right: 1px solid #9f9f9f; border-bottom: 3px solid #217346; padding: 4px 14px 0; color: #217346; font-weight: 600; }
.last-tab { border-left: 0; border-right: 1px solid #9f9f9f; padding: 0 16px; }
.add { margin-left: 33px; }
.add svg { width: 22px; height: 22px; }
.hscroll { margin: 4px 4px 0 auto; width: 200px; height: 20px; border: 1px solid #ababab; background: #fff; display: flex; justify-content: flex-end; }
.hscroll button { width: 18px; border-left: 1px solid #ababab; display: grid; place-items: center; }
.hscroll button::after { content: ""; border: 5px solid transparent; border-left-color: #555; border-right: 0; }
.status { height: 26px; flex-shrink: 0; background: #f3f2f1; display: flex; justify-content: space-between; align-items: center; padding: 0 2px 0 5px; font-size: 12px; }
.zoom { display: flex; align-items: center; }
.zoom input { appearance: none; width: 130px; height: 16px; background: linear-gradient(#a0a0a0, #a0a0a0) center / 100% 1px no-repeat; }
.zoom input::-webkit-slider-thumb { appearance: none; width: 6px; height: 14px; background: #666; }
.zoom button { width: 20px; margin-right: 12px; font-size: 18px; line-height: 16px; }

/* windows */
.back-window { position: absolute; left: 596px; top: 262px; width: 300px; height: 298px; background: #f0f0f0; border: 1px solid #888; box-shadow: 0 2px 10px rgba(0, 0, 0, 0.35); }
.back-window div { height: 38px; background: #fff; }
.dialog {
  position: absolute; left: 605px; right: 162px; top: 99px; bottom: 0; display: flex; flex-direction: column;
  background: #fff; border: 1px solid #5c5c5c; border-bottom: 0; color: #111; font-size: 14px;
  box-shadow: 0 6px 22px rgba(0, 0, 0, 0.45);
}
.caption { height: 42px; flex-shrink: 0; padding: 0 15px 6px 9px; display: flex; align-items: center; gap: 5px; }
.caption > svg { width: 20px; height: 20px; }
.caption button { margin-left: auto; }
.caption button svg { width: 13px; height: 13px; }
.address-row { height: 46px; flex-shrink: 0; display: flex; padding: 0 12px 7px 0; white-space: nowrap; }
.nav-btn { width: 39px; display: grid; place-items: center; color: #777; }
.nav-btn:first-child { margin-left: 4px; }
.nav-btn svg { width: 16px; height: 16px; }
.nav-btn.dim { color: #cfcfcf; }
.nav-btn.recent { width: 22px; }
.nav-btn.recent svg { width: 10px; height: 10px; }
.nav-btn.up { width: 30px; }
.address { flex: 1; min-width: 0; height: 39px; border: 1px solid #d9d9d9; display: flex; align-items: center; }
.crumb-folder { width: 18px; height: 20px; margin: 0 0 0 2px; }
.crumb-sep { width: 10px; height: 10px; margin: 0 9px; color: #444; }
.address-menu { margin-left: auto; width: 38px; display: grid; place-items: center; }
.address-menu svg { width: 12px; height: 12px; color: #555; }
.address-reload { width: 42px; height: 100%; border-left: 1px solid #d9d9d9; display: grid; place-items: center; color: #777; }
.address-reload svg { width: 16px; height: 16px; }
.search { width: 253px; height: 39px; margin-left: 12px; border: 1px solid #d9d9d9; display: flex; align-items: center; padding-left: 17px; gap: 16px; }
.search svg { width: 17px; height: 17px; color: #777; }
.search input { flex: 1; min-width: 0; }
.search input::placeholder { color: #6d6d6d; opacity: 1; }
.commands { height: 39px; flex-shrink: 0; background: #f5f6f7; border-bottom: 1px solid #e8e9ea; padding: 0 19px 0 22px; display: flex; align-items: center; color: #1e395b; }
.commands > button { display: flex; align-items: center; gap: 4px; margin-right: 34px; }
.commands > button svg, .tri-ico { width: 10px; height: 10px; }
.commands-right { margin-left: auto; display: flex; align-items: center; }
.commands-right button { display: flex; align-items: center; gap: 12px; margin-left: 27px; }
.views { width: 18px; height: 16px; }
.preview { width: 18px; height: 14px; }
.commands-right .help { width: 20px; height: 20px; border-radius: 10px; background: #0066cc; color: #fff; font-weight: bold; justify-content: center; }

/* navigation tree and file list */
.panes { flex: 1; min-height: 0; display: flex; }
.tree { width: 389px; overflow: hidden; }
.node { height: 30px; display: flex; align-items: center; gap: 5px; padding-left: 40px; margin-right: 1px; white-space: nowrap; }
.node svg { width: 20px; height: 20px; }
.node .pin { width: 13px; height: 13px; margin: 0 4px 0 auto; }
.node.root { padding-left: 30px; margin-top: 10px; }
.node.selected { background: #d9d9d9; }
.vbar { width: 20px; flex-shrink: 0; background: #f0f0f0; display: flex; flex-direction: column; align-items: center; }
.vbar svg, .hbar svg { width: 10px; height: 10px; margin: 5px; color: #333; stroke-width: 2; }
.vbar .track { flex: 1; width: 100%; display: flex; flex-direction: column; }
.thumb { background: #cdcdcd; }
.tree-bar .track { padding-top: 100px; padding-bottom: 16px; }
.vbar .thumb { flex: 1; }
.list-bar .thumb { flex: 0 0 73%; }
.files { flex: 1; min-width: 0; margin-left: 5px; display: flex; flex-direction: column; }
.list-row { flex: 1; min-height: 0; display: flex; }
.list { flex: 1; min-width: 0; overflow: hidden; padding: 0 1px 0 18px; }
.list table { table-layout: fixed; width: 100%; border-collapse: collapse; }
.w-date { width: 180px; }
.w-type { width: 150px; }
.w-size { width: 18px; }
.list th { padding: 0 0 9px; text-align: left; font-weight: normal; color: #4c607a; }
.list th div { position: relative; height: 32px; line-height: 34px; padding-left: 8px; border-right: 1px solid #e5e5e5; }
.list th:first-child div { padding-left: 3px; }
.list th .cut { border: 0; padding-left: 7px; overflow: hidden; }
.sort { position: absolute; left: 50%; top: -2px; width: 10px; height: 10px; margin-left: -7px; }
.list td { height: 27px; padding: 0 0 0 8px; color: #6d6d6d; white-space: nowrap; overflow: hidden; line-height: 20px; }
.list .file-name { display: flex; align-items: center; gap: 6px; padding-left: 4px; color: #111; }
.file-name svg { width: 20px; height: 22px; margin-top: -4px; }
.hover { background: #e5f3ff; }
.hbar { height: 20px; margin-right: 20px; background: #f0f0f0; display: flex; align-items: center; }
.hbar .track { flex: 1; height: 19px; display: flex; }
.hbar .thumb { width: 87%; }
.dialog-foot { height: 45px; flex-shrink: 0; background: #f0f0f0; display: flex; padding: 16px 20px 0 0; }
.dialog-foot label { width: 254px; text-align: right; line-height: 28px; }
.combo { flex: 1; display: flex; align-items: center; height: 29px; margin-left: 6px; background: #fff; border: 1px solid #0078d7; padding-right: 5px; }
.combo input { flex: 1; height: 100%; padding: 0 4px; }
.combo svg, .filter svg { width: 10px; height: 10px; color: #444; }
.filter { position: relative; width: 235px; height: 28px; margin-left: 15px; border: 1px solid #adadad; background: #e1e1e1; }
.filter select { appearance: none; width: 100%; height: 100%; padding-left: 3px; }
.filter svg { position: absolute; right: 5px; top: 9px; pointer-events: none; }
</style>
